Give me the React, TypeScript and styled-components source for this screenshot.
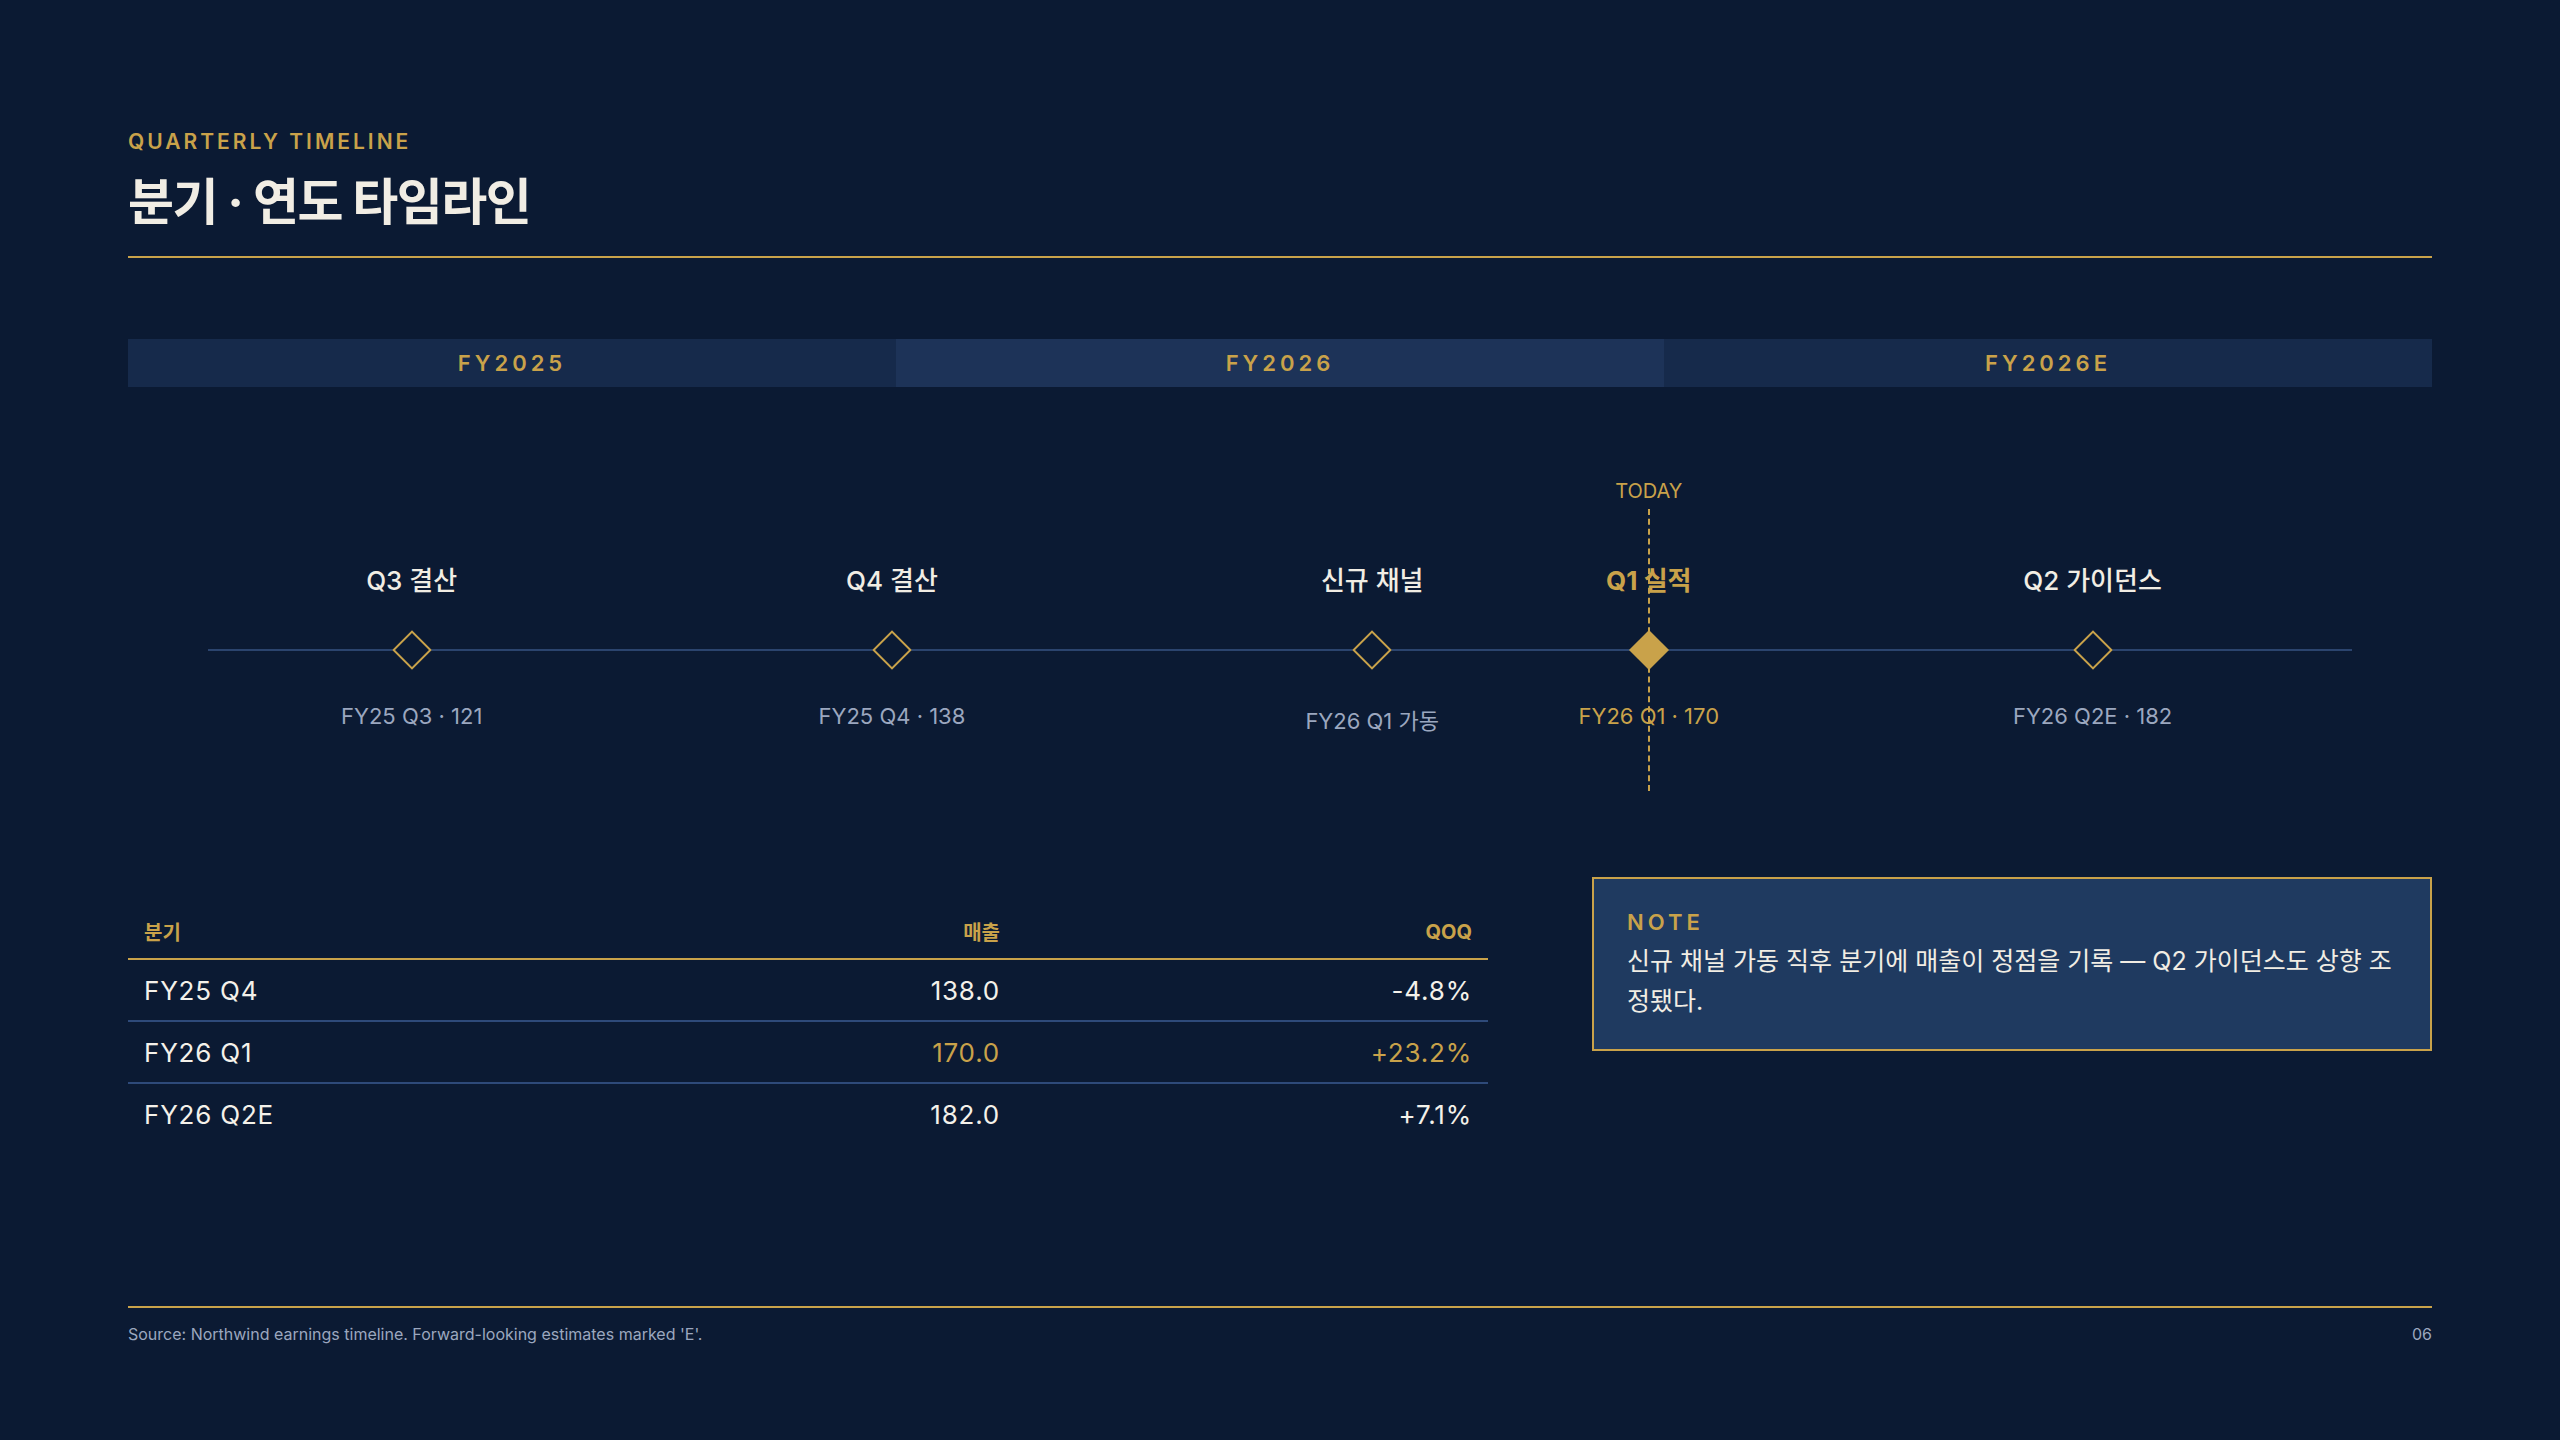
import React from 'react'
import styled, { createGlobalStyle } from 'styled-components'

const GOLD = '#c9a24a'
const BG = '#0b1a33'

const GlobalStyle = createGlobalStyle`
  html, body { margin: 0; padding: 0; background: ${BG}; }
  body { font-family: Inter, "Noto Sans CJK KR", sans-serif; color: #f1ede4; }
`

interface EventItem {
  title: string
  sub: string
  pos: number
  today?: boolean
}

const events: EventItem[] = [
  { title: 'Q3 결산', sub: 'FY25 Q3 · 121', pos: 0.095 },
  { title: 'Q4 결산', sub: 'FY25 Q4 · 138', pos: 0.319 },
  { title: '신규 채널', sub: 'FY26 Q1 가동', pos: 0.543 },
  { title: 'Q1 실적', sub: 'FY26 Q1 · 170', pos: 0.672, today: true },
  { title: 'Q2 가이던스', sub: 'FY26 Q2E · 182', pos: 0.879 },
]

const rows = [
  { q: 'FY25 Q4', rev: '138.0', qoq: '-4.8%' },
  { q: 'FY26 Q1', rev: '170.0', qoq: '+23.2%', hl: true },
  { q: 'FY26 Q2E', rev: '182.0', qoq: '+7.1%' },
]

export default function App () {
  return (
    <>
      <GlobalStyle />
      <Page>
        <Header>
          <Eyebrow>QUARTERLY TIMELINE</Eyebrow>
          <Title>분기 · 연도 타임라인</Title>
        </Header>

        <YearBar>
          <YearCell>FY2025</YearCell>
          <YearCell active>FY2026</YearCell>
          <YearCell>FY2026E</YearCell>
        </YearBar>

        <Timeline>
          <Axis />
          {events.map(e => (
            <Event key={e.title} style={{ left: `${e.pos * 100}%` }}>
              {e.today && (
                <>
                  <TodayLabel>TODAY</TodayLabel>
                  <TodayLine />
                </>
              )}
              <EventTitle today={e.today}>{e.title}</EventTitle>
              <Diamond filled={e.today} />
              <EventSub today={e.today}>{e.sub}</EventSub>
            </Event>
          ))}
        </Timeline>

        <Bottom>
          <Table>
            <thead>
              <tr>
                <Th>분기</Th>
                <Th right>매출</Th>
                <Th right>QOQ</Th>
              </tr>
            </thead>
            <tbody>
              {rows.map(r => (
                <Tr key={r.q}>
                  <Td>{r.q}</Td>
                  <Td right hl={r.hl}>{r.rev}</Td>
                  <Td right hl={r.hl}>{r.qoq}</Td>
                </Tr>
              ))}
            </tbody>
          </Table>
          <Note>
            <NoteLabel>NOTE</NoteLabel>
            <NoteText>신규 채널 가동 직후 분기에 매출이 정점을 기록 — Q2 가이던스도 상향 조정됐다.</NoteText>
          </Note>
        </Bottom>

        <Footer>
          <span>Source: Northwind earnings timeline. Forward-looking estimates marked 'E'.</span>
          <span>06</span>
        </Footer>
      </Page>
    </>
  )
}

const Page = styled.div`
  width: 2560px;
  height: 1440px;
  box-sizing: border-box;
  padding: 128px 128px 0;
  display: flex;
  flex-direction: column;
`

const Header = styled.div`
  border-bottom: 2px solid ${GOLD};
  padding-bottom: 20px;
`

const Eyebrow = styled.div`
  color: ${GOLD};
  font-size: 21px;
  font-weight: 600;
  letter-spacing: 3px;
  line-height: 28px;
`

const Title = styled.h1`
  margin: 12px 0 0;
  font-size: 50px;
  font-weight: 700;
  line-height: 68px;
  letter-spacing: -1.5px;
  color: #f1ede4;
`

const YearBar = styled.div`
  margin-top: 81px;
  display: grid;
  grid-template-columns: repeat(3, 1fr);
  height: 48px;
`

const YearCell = styled.div<{ active?: boolean }>`
  display: flex;
  align-items: center;
  justify-content: center;
  background: ${({ active }) => active ? '#1d3358' : '#162a4b'};
  color: ${GOLD};
  font-size: 22px;
  font-weight: 600;
  letter-spacing: 4px;
`

const Timeline = styled.div`
  position: relative;
  margin: 0 80px;
  height: 480px;
`

const Axis = styled.div`
  position: absolute;
  left: 0;
  right: 0;
  top: 262px;
  height: 2px;
  background: #2b446e;
`

const Event = styled.div`
  position: absolute;
  top: 0;
  width: 0;
  height: 100%;
`

const TodayLabel = styled.div`
  position: absolute;
  top: 92px;
  left: 50%;
  transform: translateX(-50%);
  font-size: 20px;
  color: ${GOLD};
  white-space: nowrap;
`

const TodayLine = styled.div`
  position: absolute;
  top: 122px;
  height: 282px;
  left: -1px;
  border-left: 2px dashed ${GOLD};
`

const EventTitle = styled.div<{ today?: boolean }>`
  position: absolute;
  top: 173px;
  left: 50%;
  transform: translateX(-50%);
  white-space: nowrap;
  font-size: 26px;
  font-weight: ${({ today }) => today ? 700 : 500};
  color: ${({ today }) => today ? GOLD : '#f1ede4'};
`

const Diamond = styled.div<{ filled?: boolean }>`
  position: absolute;
  top: 249px;
  left: -14px;
  width: 28px;
  height: 28px;
  box-sizing: border-box;
  transform: rotate(45deg);
  border: 2px solid ${GOLD};
  background: ${({ filled }) => filled ? GOLD : BG};
`

const EventSub = styled.div<{ today?: boolean }>`
  position: absolute;
  top: 316px;
  left: 50%;
  transform: translateX(-50%);
  white-space: nowrap;
  font-size: 22px;
  color: ${({ today }) => today ? GOLD : '#9ba7bf'};
`

const Bottom = styled.div`
  margin-top: 38px;
  display: grid;
  grid-template-columns: 1360px 1fr;
  column-gap: 104px;
  align-items: start;
`

const Table = styled.table`
  border-collapse: collapse;
  width: 100%;
`

const Th = styled.th<{ right?: boolean }>`
  text-align: ${({ right }) => right ? 'right' : 'left'};
  color: ${GOLD};
  font-size: 20px;
  font-weight: 700;
  padding: 12px 16px;
  border-bottom: 2px solid ${GOLD};
  &:nth-child(3) { width: 440px; }
`

const Tr = styled.tr`
  & + & td { border-top: 2px solid #2e4a7a; }
`

const Td = styled.td<{ right?: boolean; hl?: boolean }>`
  text-align: ${({ right }) => right ? 'right' : 'left'};
  color: ${({ hl }) => hl ? GOLD : '#f4f1ea'};
  font-size: 26px;
  height: 60px;
  padding: 0 16px;
  letter-spacing: 0.8px;
`

const Note = styled.div`
  margin-top: -28px;
  background: #1f3a60;
  border: 2px solid ${GOLD};
  padding: 28px 32px 28px 33px;
`

const NoteLabel = styled.div`
  color: ${GOLD};
  font-size: 22px;
  font-weight: 600;
  letter-spacing: 4px;
  line-height: 30px;
`

const NoteText = styled.div`
  margin-top: 4px;
  font-size: 25px;
  line-height: 40px;
  color: #f1ede4;
`

const Footer = styled.div`
  margin-top: auto;
  margin-bottom: 96px;
  border-top: 2px solid ${GOLD};
  padding-top: 16px;
  display: flex;
  justify-content: space-between;
  font-size: 16px;
  color: #9ba7bf;
`
